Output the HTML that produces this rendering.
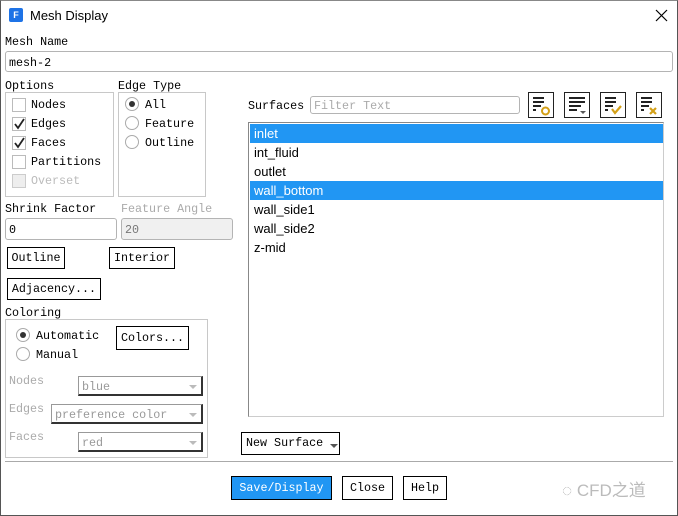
<!DOCTYPE html>
<html><head><style>
*{box-sizing:border-box;margin:0;padding:0}
body{width:678px;height:516px;background:#fff;position:relative;overflow:hidden;font-family:"Liberation Mono","Noto Sans CJK SC",monospace;font-size:11.7px;color:#000}
.a{position:absolute;white-space:nowrap}
.box{position:absolute;border:1px solid #c8c8c8}
.inp{position:absolute;border:1px solid #b4b4b4;border-radius:3px;background:#fff;padding:4px 0 0 3px}
.btn{position:absolute;border:1px solid #000;background:#fff;text-align:center}
.cb{position:absolute;width:14px;height:14px;border:1px solid #bbb;background:#fff}
.rd{position:absolute;width:14px;height:14px;border:1px solid #aaa;border-radius:50%;background:#fff}
.dd{position:absolute;border:1px solid #999;border-right:2px solid #333;border-bottom:2px solid #333;color:#999;padding:3px 0 0 3px;background:#fff}
.dd:after{content:"";position:absolute;right:4px;top:8px;border:4px solid transparent;border-top:4px solid #bbb}
.g{color:#aaa}
.li{position:absolute;left:1px;width:413px;height:19px;font-family:"Liberation Sans","Noto Sans CJK SC",sans-serif;font-size:13px;line-height:19px;padding-left:4px}
.ib{position:absolute;top:92px;width:26px;height:26px;border:1px solid #222;background:#fff}
</style></head><body>
<div style="position:absolute;inset:0;border:1px solid #555;border-top:1px solid #888"></div>
<div class="a" style="left:9px;top:8px;width:14px;height:14px;background:#1e73e6;border-radius:2px;color:#fff;font:bold 9px 'Liberation Sans';text-align:center;line-height:14px">F</div>
<div class="a" style="left:30px;top:8px;font:13px 'Liberation Sans',sans-serif">Mesh Display</div>
<svg class="a" style="left:655px;top:9px" width="13" height="13"><path d="M1 1L12 12M12 1L1 12" stroke="#000" stroke-width="1.2"/></svg>

<div class="a" style="left:5px;top:35px">Mesh Name</div>
<div class="inp" style="left:5px;top:51px;width:668px;height:21px">mesh-2</div>

<div class="a" style="left:5px;top:79px">Options</div>
<div class="box" style="left:5px;top:92px;width:109px;height:105px"></div>
<div class="cb" style="left:12px;top:98px"></div><div class="a" style="left:31px;top:98px">Nodes</div>
<div class="cb" style="left:12px;top:117px"></div><svg class="a" style="left:13px;top:118px" width="12" height="12"><path d="M2 6l3 4 6-9" stroke="#222" stroke-width="1.8" fill="none"/></svg><div class="a" style="left:31px;top:117px">Edges</div>
<div class="cb" style="left:12px;top:136px"></div><svg class="a" style="left:13px;top:137px" width="12" height="12"><path d="M2 6l3 4 6-9" stroke="#222" stroke-width="1.8" fill="none"/></svg><div class="a" style="left:31px;top:136px">Faces</div>
<div class="cb" style="left:12px;top:155px"></div><div class="a" style="left:31px;top:155px">Partitions</div>
<div class="cb" style="left:12px;top:174px;background:#eee;border-color:#ccc"></div><div class="a" style="left:31px;top:174px;color:#bbb">Overset</div>

<div class="a" style="left:118px;top:79px">Edge Type</div>
<div class="box" style="left:118px;top:92px;width:88px;height:105px"></div>
<div class="rd" style="left:125px;top:97px"></div><div class="a" style="left:129px;top:101px;width:6px;height:6px;border-radius:50%;background:#333"></div><div class="a" style="left:145px;top:98px">All</div>
<div class="rd" style="left:125px;top:116px"></div><div class="a" style="left:145px;top:117px">Feature</div>
<div class="rd" style="left:125px;top:135px"></div><div class="a" style="left:145px;top:136px">Outline</div>

<div class="a" style="left:5px;top:202px">Shrink Factor</div>
<div class="a g" style="left:121px;top:202px">Feature Angle</div>
<div class="inp" style="left:5px;top:218px;width:112px;height:22px">0</div>
<div class="inp" style="left:121px;top:218px;width:112px;height:22px;background:#f0f0f0;color:#777">20</div>
<div class="btn" style="left:7px;top:247px;width:58px;height:22px;line-height:20px">Outline</div>
<div class="btn" style="left:109px;top:247px;width:66px;height:22px;line-height:20px">Interior</div>
<div class="btn" style="left:7px;top:278px;width:94px;height:22px;line-height:20px">Adjacency...</div>

<div class="a" style="left:5px;top:306px">Coloring</div>
<div class="box" style="left:5px;top:319px;width:203px;height:139px"></div>
<div class="rd" style="left:16px;top:328px"></div><div class="a" style="left:20px;top:332px;width:6px;height:6px;border-radius:50%;background:#333"></div><div class="a" style="left:36px;top:329px">Automatic</div>
<div class="rd" style="left:16px;top:347px"></div><div class="a" style="left:36px;top:348px">Manual</div>
<div class="btn" style="left:116px;top:326px;width:73px;height:24px;line-height:22px">Colors...</div>
<div class="a g" style="left:9px;top:374px">Nodes</div>
<div class="dd" style="left:78px;top:376px;width:125px;height:20px">blue</div>
<div class="a g" style="left:9px;top:402px">Edges</div>
<div class="dd" style="left:51px;top:404px;width:152px;height:20px">preference color</div>
<div class="a g" style="left:9px;top:430px">Faces</div>
<div class="dd" style="left:78px;top:432px;width:125px;height:20px">red</div>

<div class="a" style="left:248px;top:99px">Surfaces</div>
<div class="inp" style="left:310px;top:96px;width:210px;height:18px;padding-top:2px;color:#aaa">Filter Text</div>
<div class="ib" style="left:528px"><svg width="24" height="24"><path d="M4 5h11M4 9h11M4 13h8M4 17h3" stroke="#222" stroke-width="2"/><circle cx="16.5" cy="18" r="3.5" stroke="#d4a017" stroke-width="2" fill="none"/></svg></div>
<div class="ib" style="left:564px"><svg width="24" height="24"><path d="M4 5h16M4 9h16M4 13h12M4 17h8" stroke="#222" stroke-width="2"/><path d="M15 18h6l-3 3z" fill="#555"/></svg></div>
<div class="ib" style="left:600px"><svg width="24" height="24"><path d="M4 5h11M4 9h11M4 13h8M4 17h3" stroke="#222" stroke-width="2"/><path d="M11 16l3 4 6-7" stroke="#d4a017" stroke-width="2.2" fill="none"/></svg></div>
<div class="ib" style="left:636px"><svg width="24" height="24"><path d="M4 5h11M4 9h11M4 13h8M4 17h3" stroke="#222" stroke-width="2"/><path d="M13 15l6 6M19 15l-6 6" stroke="#d4a017" stroke-width="2.2"/></svg></div>

<div class="a" style="left:248px;top:122px;width:416px;height:295px;border:1px solid #888;border-right-color:#ccc;border-bottom-color:#ccc">
<div class="li" style="top:1px;background:#2196f3;color:#fff">inlet</div>
<div class="li" style="top:20px">int_fluid</div>
<div class="li" style="top:39px">outlet</div>
<div class="li" style="top:58px;background:#2196f3;color:#fff">wall_bottom</div>
<div class="li" style="top:77px">wall_side1</div>
<div class="li" style="top:96px">wall_side2</div>
<div class="li" style="top:115px">z-mid</div>
</div>
<div class="btn" style="left:241px;top:432px;width:99px;height:23px;text-align:left;padding-left:4px;line-height:21px">New Surface <span style="display:inline-block;border:4px solid transparent;border-top:4px solid #555;vertical-align:-6px"></span></div>

<div class="a" style="left:5px;top:461px;width:668px;height:1px;background:#aaa"></div>
<div class="btn" style="left:231px;top:476px;width:101px;height:24px;background:#2196f3;color:#fff;line-height:22px">Save/Display</div>
<div class="btn" style="left:342px;top:476px;width:51px;height:24px;line-height:22px">Close</div>
<div class="btn" style="left:403px;top:476px;width:44px;height:24px;line-height:22px">Help</div>
<div class="a" style="left:562px;top:476px;color:#bbb;font:17px 'Liberation Sans','Noto Sans CJK SC',sans-serif">◌&nbsp;CFD之道</div>
</body></html>
